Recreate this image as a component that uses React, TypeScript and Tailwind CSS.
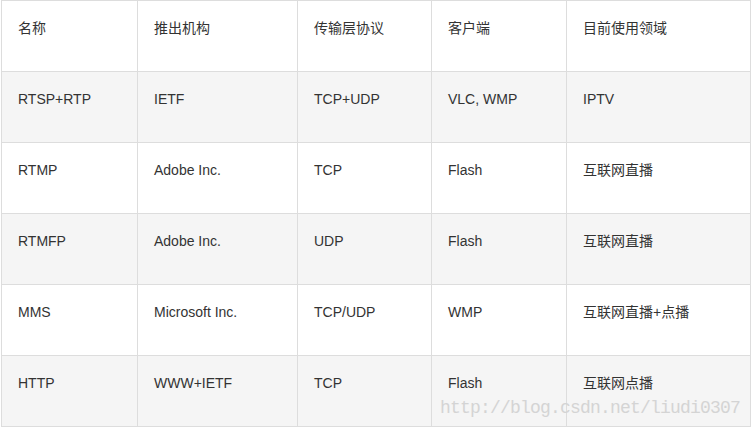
const columns = ["名称", "推出机构", "传输层协议", "客户端", "目前使用领域"];

const widths = ["w-[136px]", "w-[160px]", "w-[134px]", "w-[135px]", "w-[184px]"];

const rows = [
  ["RTSP+RTP", "IETF", "TCP+UDP", "VLC, WMP", "IPTV"],
  ["RTMP", "Adobe Inc.", "TCP", "Flash", "互联网直播"],
  ["RTMFP", "Adobe Inc.", "UDP", "Flash", "互联网直播"],
  ["MMS", "Microsoft Inc.", "TCP/UDP", "WMP", "互联网直播+点播"],
  ["HTTP", "WWW+IETF", "TCP", "Flash", "互联网点播"],
];

const Row = ({ cells, striped }: { cells: string[]; striped: boolean }) => (
  <div
    className={`flex h-[71px] border-b border-[#dddddd] ${
      striped ? "bg-[#f5f5f5]" : "bg-white"
    }`}
  >
    {cells.map((cell, i) => (
      <div
        key={i}
        className={`${widths[i]} shrink-0 border-r border-[#dddddd] pl-4 pt-[17px] text-[14px] leading-5 text-[#333333]`}
      >
        {cell}
      </div>
    ))}
  </div>
);

export default function App() {
  return (
    <div
      className="relative h-[428px] w-[752px] overflow-hidden bg-white"
      style={{ fontFamily: '"Liberation Sans", "Noto Sans CJK SC", sans-serif' }}
    >
      <div className="ml-[1px] w-[750px] border-l border-t border-[#dddddd]">
        <Row cells={columns} striped={false} />
        {rows.map((r, i) => (
          <Row key={i} cells={r} striped={i % 2 === 0} />
        ))}
      </div>

      {/* watermark */}
      <div className="pointer-events-none absolute left-[440px] top-[396px] font-['Liberation_Mono',monospace] text-[18px] leading-6 tracking-[-0.8px] text-[#d4d4d4]">
        http://blog.csdn.net/liudi0307
      </div>
    </div>
  );
}
